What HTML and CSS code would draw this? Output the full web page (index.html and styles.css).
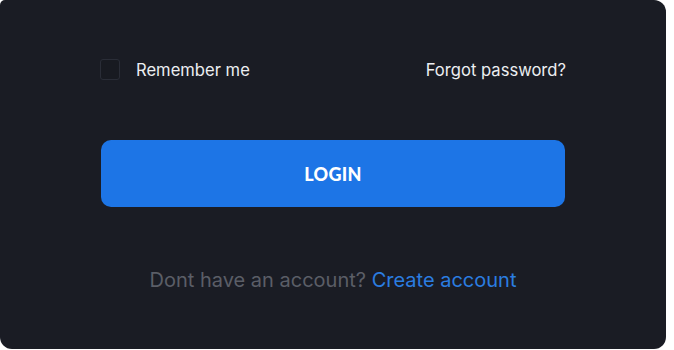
FILE: index.html
```html
<!DOCTYPE html>
<html lang="en">
<head>
<meta charset="utf-8">
<title>Login</title>
<link rel="stylesheet" href="styles.css">
</head>
<body>
<div class="card">
  <div class="row">
    <label class="remember">
      <span class="checkbox"></span>
      <span>Remember me</span>
    </label>
    <a class="forgot" href="#">Forgot password?</a>
  </div>
  <button class="login" type="button">LOGIN</button>
  <p class="signup">Dont have an account? <a href="#">Create account</a></p>
</div>
</body>
</html>
```
FILE: styles.css
```css
html, body {
  margin: 0;
  padding: 0;
  background: #ffffff;
}
body {
  width: 674px;
  height: 350px;
  overflow: hidden;
  font-family: Inter, "Noto Sans", sans-serif;
}
.card {
  box-sizing: border-box;
  width: 666px;
  height: 349px;
  background: #1a1c24;
  border-radius: 5px 12px 12px 12px;
  padding: 59px 100px 0 100px;
  display: flex;
  flex-direction: column;
}
.row {
  height: 21px;
  display: flex;
  align-items: center;
  justify-content: space-between;
}
.remember {
  display: flex;
  align-items: center;
  gap: 16px;
  color: #eceef1;
  font-size: 16.6px;
}
.checkbox {
  box-sizing: border-box;
  width: 20px;
  height: 21px;
  border: 1px solid #2a2d37;
  border-radius: 3px;
  background: #181a21;
}
.forgot {
  color: #eceef1;
  font-size: 16.6px;
  text-decoration: none;
}
.login {
  margin: 60px 0 0 1px;
  height: 67px;
  width: 464px;
  border: none;
  border-radius: 10px;
  background: #1d75e6;
  color: #ffffff;
  font-family: Lato, Inter, sans-serif;
  font-weight: 900;
  font-size: 18px;
  letter-spacing: 0.3px;
  padding: 0;
}
.signup {
  margin: 61px 0 0 0;
  text-align: center;
  font-size: 20px;
  line-height: 24px;
  color: #5b5e67;
}
.signup a {
  color: #2b7de0;
  text-decoration: none;
}
```
